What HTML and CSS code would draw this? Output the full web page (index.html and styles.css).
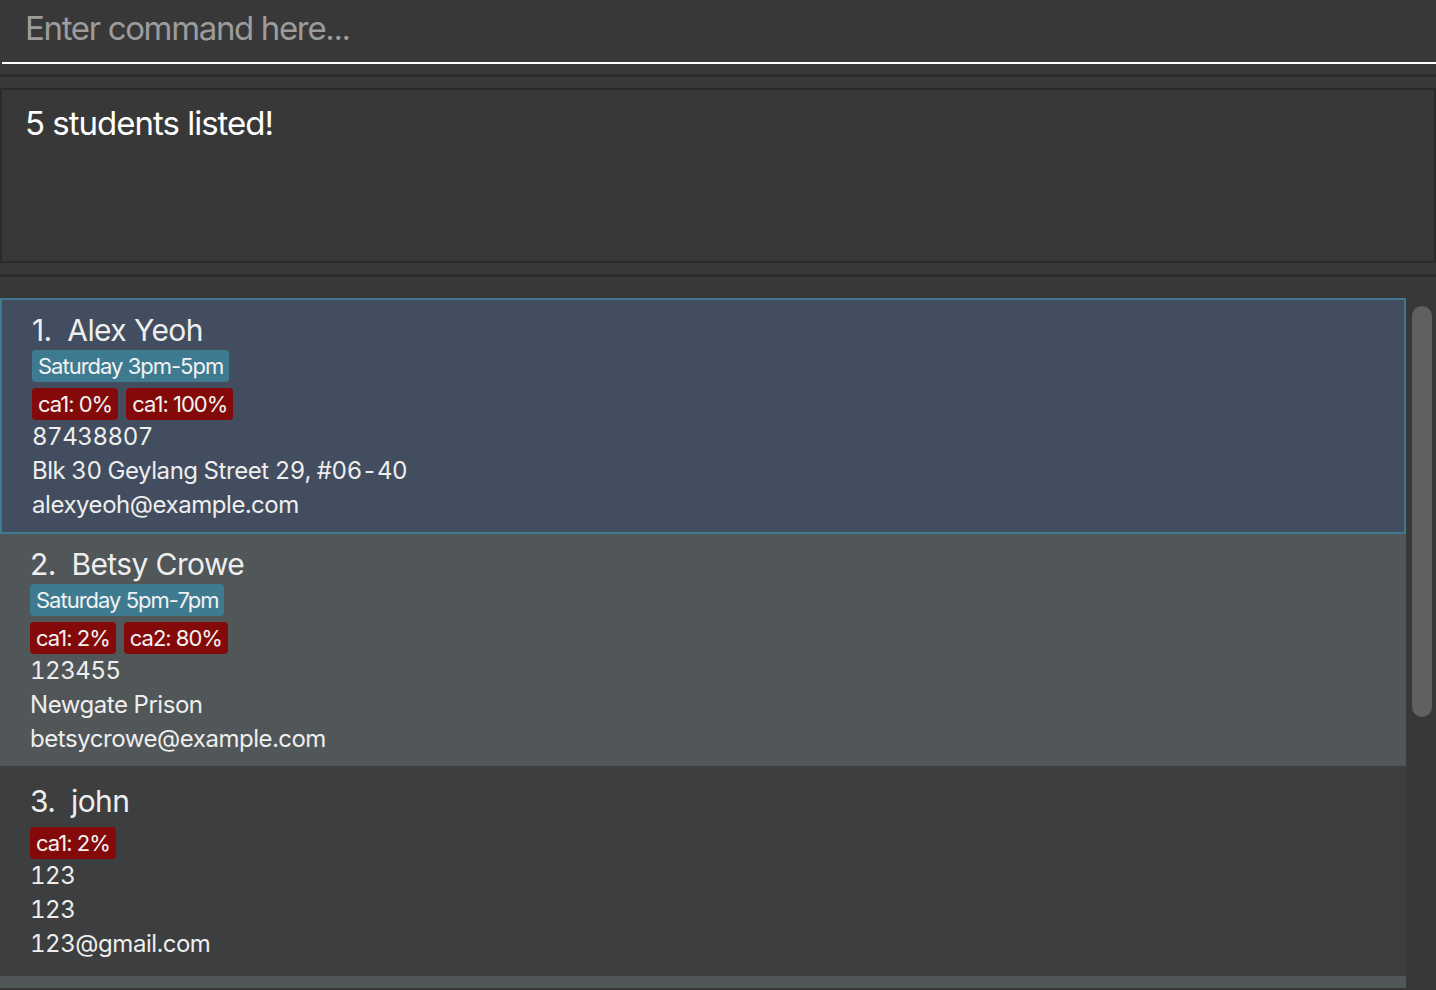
FILE: index.html
```html
<!DOCTYPE html>
<html lang="en">
<head>
<meta charset="utf-8">
<title>Address Book</title>
<link rel="stylesheet" href="styles.css">
</head>
<body>
<div class="app">
  <div class="command">
    <div class="command-field">Enter command here...</div>
  </div>
  <div class="divider divider-top"></div>
  <div class="result">
    <div class="result-text">5 students listed!</div>
  </div>
  <div class="divider divider-bottom"></div>
  <div class="list-panel">
    <div class="cells">
      <div class="cell cell-even selected">
        <div class="name">1.&nbsp; Alex Yeoh</div>
        <div class="schedule"><span class="tag tag-schedule">Saturday 3pm-5pm</span></div>
        <div class="tags"><span class="tag tag-grade">ca1: 0%</span><span class="tag tag-grade">ca1: 100%</span></div>
        <div class="detail">87438807</div>
        <div class="detail">Blk 30 Geylang Street 29, #06-40</div>
        <div class="detail">alexyeoh@example.com</div>
      </div>
      <div class="cell cell-odd">
        <div class="name">2.&nbsp; Betsy Crowe</div>
        <div class="schedule"><span class="tag tag-schedule">Saturday 5pm-7pm</span></div>
        <div class="tags"><span class="tag tag-grade">ca1: 2%</span><span class="tag tag-grade">ca2: 80%</span></div>
        <div class="detail">123455</div>
        <div class="detail">Newgate Prison</div>
        <div class="detail">betsycrowe@example.com</div>
      </div>
      <div class="cell cell-even">
        <div class="name">3.&nbsp; john</div>
        <div class="schedule"></div>
        <div class="tags"><span class="tag tag-grade">ca1: 2%</span></div>
        <div class="detail">123</div>
        <div class="detail">123</div>
        <div class="detail">123@gmail.com</div>
      </div>
      <div class="cell cell-odd"></div>
    </div>
    <div class="scrollbar">
      <div class="thumb"></div>
    </div>
  </div>
</div>
</body>
</html>
```

FILE: styles.css
```css
html, body {
  margin: 0;
  padding: 0;
}

body {
  background: #383838;
  font-family: Inter, "Noto Sans", "Liberation Sans", sans-serif;
  color: #eeeeee;
  width: 1436px;
  height: 990px;
  overflow: hidden;
}

.app {
  display: flex;
  flex-direction: column;
  height: 990px;
}

.command {
  padding-left: 2px;
  height: 64px;
  box-sizing: border-box;
}

.command-field {
  height: 64px;
  box-sizing: border-box;
  border-bottom: 2px solid #ffffff;
  padding-left: 23px;
  font-size: 33px;
  line-height: 56px;
  color: #9c9c9c;
  letter-spacing: -1.35px;
}

.divider {
  height: 3px;
  background: #2b2b2b;
  flex: none;
}

.divider-top {
  margin-top: 10px;
  margin-bottom: 11px;
}

.divider-bottom {
  margin-top: 11px;
  margin-bottom: 21px;
}

.result {
  height: 175px;
  box-sizing: border-box;
  border: 2px solid #2b2b2b;
  padding: 13px 0 0 23px;
  flex: none;
}

.result-text {
  font-size: 33px;
  line-height: 40px;
  color: #ffffff;
  letter-spacing: -1px;
}

.list-panel {
  display: flex;
  height: 690px;
  flex: none;
  overflow: hidden;
}

.cells {
  width: 1406px;
  display: flex;
  flex-direction: column;
}

.cell {
  box-sizing: border-box;
  min-height: 210px;
  padding: 12px 0 10px 30px;
  display: flex;
  flex-direction: column;
  justify-content: center;
  flex: none;
}

.cell-even {
  background: #3c3e3f;
}

.cell-odd {
  background: #515658;
}

.selected {
  background: #424d5f;
  border: 2px solid #3e7b91;
}

.name {
  font-size: 30px;
  line-height: 36px;
  color: #eeeeee;
  white-space: pre;
  letter-spacing: -0.6px;
}

.schedule {
  display: flex;
  gap: 8px;
  margin-top: 2px;
}

.tags {
  display: flex;
  gap: 8px;
  margin-top: 6px;
}

.tag {
  font-size: 22px;
  line-height: 32px;
  height: 32px;
  padding: 0 6px;
  border-radius: 4px;
  color: #f2f2f2;
  white-space: pre;
  letter-spacing: -1px;
}

.tag-schedule {
  background: #3e7b91;
}

.tag-grade {
  background: #840909;
}

.detail {
  font-size: 24px;
  line-height: 34px;
  color: #eeeeee;
  letter-spacing: -0.45px;
  font-variant-numeric: tabular-nums;
}

.scrollbar {
  width: 30px;
  padding-top: 8px;
  box-sizing: border-box;
  background: #383838;
}

.thumb {
  width: 20px;
  height: 411px;
  margin-left: 6px;
  border-radius: 10px;
  background: #606060;
}
```
